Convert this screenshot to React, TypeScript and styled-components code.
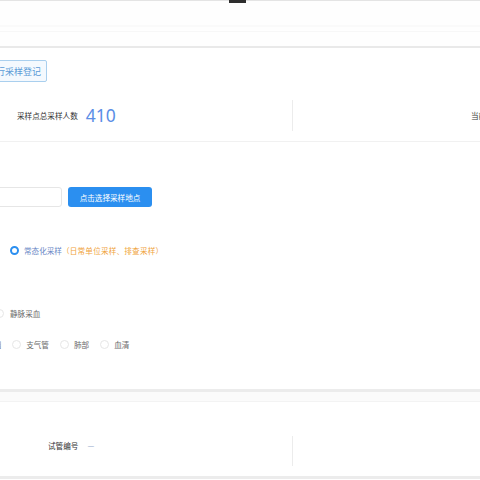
import React from "react";
import styled, { createGlobalStyle } from "styled-components";

const Global = createGlobalStyle`
  html, body { margin: 0; padding: 0; background: #ffffff; }
  body { font-family: "Noto Sans CJK SC", "Noto Sans", sans-serif; }
`;

const Page = styled.div`
  width: 480px;
  height: 480px;
  overflow: hidden;
  display: flex;
  flex-direction: column;
  background: #ffffff;
`;

const TopBar = styled.div`
  height: 45px;
  border-top: 1px solid #e4e4e4;
  border-bottom: 2px solid #e9e9e9;
  display: flex;
  flex-direction: column;
  background: #fefefe;
`;

const Handle = styled.div`
  width: 17px;
  height: 3px;
  margin-top: -1px;
  margin-left: 229px;
  background: #2e2e2e;
`;

const Strip = styled.div`
  margin-top: 22px;
  height: 4px;
  border-top: 2px solid #fafafa;
  border-bottom: 1px solid #f7f7f7;
`;

const Card = styled.section<{ $top: number; $bottom: number }>`
  display: flex;
  flex-direction: column;
  padding-top: ${(p) => p.$top}px;
  padding-bottom: ${(p) => p.$bottom}px;
  background: #ffffff;
`;

const TagButton = styled.div`
  align-self: flex-start;
  margin-left: -20px;
  height: 20px;
  padding: 0 5px 0 6px;
  display: flex;
  align-items: center;
  border: 1px solid #a9cfee;
  background: #f4f9fe;
  color: #5b9bd6;
  font-size: 9px;
  border-radius: 2px;
`;

const StatsBlock = styled.div`
  margin-top: 18px;
  padding-bottom: 10px;
  border-bottom: 1px solid #f1f1f1;
  display: grid;
  grid-template-columns: 292px 1fr;
`;

const StatCell = styled.div<{ $pad: number; $divider?: boolean }>`
  height: 31px;
  display: flex;
  align-items: center;
  padding-left: ${(p) => p.$pad}px;
  border-left: ${(p) => (p.$divider ? "1px solid #ececec" : "none")};
  white-space: nowrap;
`;

const StatLabel = styled.span`
  font-size: 7.6px;
  color: #333333;
`;

const StatValue = styled.span`
  margin-left: 8px;
  font-family: "Noto Sans", "Liberation Sans", sans-serif;
  font-size: 17.5px;
  color: #5b8ee6;
  line-height: 1;
`;

const FormRow = styled.div`
  margin-top: 45px;
  display: flex;
  gap: 6px;
`;

const Input = styled.div`
  margin-left: -40px;
  width: 100px;
  height: 18px;
  border: 1px solid #e6e6e6;
  border-radius: 3px;
  background: #ffffff;
`;

const PrimaryButton = styled.button`
  width: 84px;
  height: 20px;
  border: none;
  border-radius: 3px;
  background: #2b8ff0;
  color: #ffffff;
  font-family: inherit;
  font-size: 7.6px;
  padding: 0;
  display: flex;
  align-items: center;
  justify-content: center;
`;

const RadioRow = styled.div<{ $mt: number; $ml: number }>`
  margin-top: ${(p) => p.$mt}px;
  margin-left: ${(p) => p.$ml}px;
  height: 14px;
  display: flex;
  align-items: center;
  gap: 11px;
  white-space: nowrap;
`;

const RadioItem = styled.label<{ $gap?: number }>`
  display: flex;
  align-items: center;
  gap: ${(p) => p.$gap ?? 5}px;
  font-size: 7.6px;
  color: #6b6b6b;
`;

const Radio = styled.span<{ $checked?: boolean }>`
  box-sizing: border-box;
  width: 9px;
  height: 9px;
  border-radius: 50%;
  flex: none;
  border: ${(p) => (p.$checked ? "2.5px solid #2b8ff0" : "1px solid #e6e6e6")};
  background: #ffffff;
`;

const Blue = styled.span`
  color: #6a88c6;
`;

const Orange = styled.span`
  color: #f0a33c;
  letter-spacing: 0.2px;
`;

const Separator = styled.div`
  height: 9px;
  border-top: 3px solid #ececec;
  border-bottom: 1px solid #f3f3f3;
  background: #fbfbfb;
`;

const InfoGrid = styled.div`
  display: grid;
  grid-template-columns: 292px 1fr;
`;

const InfoCell = styled.div<{ $pad: number; $divider?: boolean }>`
  height: 30px;
  box-sizing: border-box;
  padding-left: ${(p) => p.$pad}px;
  padding-top: 4px;
  display: flex;
  align-items: flex-start;
  border-left: ${(p) => (p.$divider ? "1px solid #ececec" : "none")};
`;

const InfoLabel = styled.span`
  font-size: 7.6px;
  color: #333333;
  line-height: 12px;
`;

const InfoValue = styled.span`
  margin-left: 9px;
  font-size: 7.6px;
  color: #8aa0c8;
  line-height: 12px;
`;

const BottomLine = styled.div`
  height: 3px;
  background: #ececec;
`;

export default function App() {
  return (
    <>
      <Global />
      <Page>
        <TopBar>
          <Handle />
          <Strip />
        </TopBar>
        <Card $top={12} $bottom={38}>
          <TagButton>进行采样登记</TagButton>
          <StatsBlock>
            <StatCell $pad={17}>
              <StatLabel>采样点总采样人数</StatLabel>
              <StatValue>410</StatValue>
            </StatCell>
            <StatCell $pad={178} $divider>
              <StatLabel>当前采样人数</StatLabel>
            </StatCell>
          </StatsBlock>
          <FormRow>
            <Input />
            <PrimaryButton>点击选择采样地点</PrimaryButton>
          </FormRow>
          <RadioRow $mt={36} $ml={10}>
            <RadioItem>
              <Radio $checked />
              <span>
                <Blue>常态化采样</Blue>
                <Orange>（日常单位采样、排查采样）</Orange>
              </span>
            </RadioItem>
          </RadioRow>
          <RadioRow $mt={49} $ml={-5}>
            <RadioItem $gap={6}>
              <Radio />
              <span>静脉采血</span>
            </RadioItem>
          </RadioRow>
          <RadioRow $mt={17} $ml={-28}>
            <RadioItem>
              <Radio />
              <span>口咽</span>
            </RadioItem>
            <RadioItem>
              <Radio />
              <span>支气管</span>
            </RadioItem>
            <RadioItem>
              <Radio />
              <span>肺部</span>
            </RadioItem>
            <RadioItem>
              <Radio />
              <span>血清</span>
            </RadioItem>
          </RadioRow>
        </Card>
        <Separator />
        <Card $top={34} $bottom={10}>
          <InfoGrid>
            <InfoCell $pad={48}>
              <InfoLabel>试管编号</InfoLabel>
              <InfoValue>—</InfoValue>
            </InfoCell>
            <InfoCell $pad={178} $divider />
          </InfoGrid>
        </Card>
        <BottomLine />
      </Page>
    </>
  );
}
